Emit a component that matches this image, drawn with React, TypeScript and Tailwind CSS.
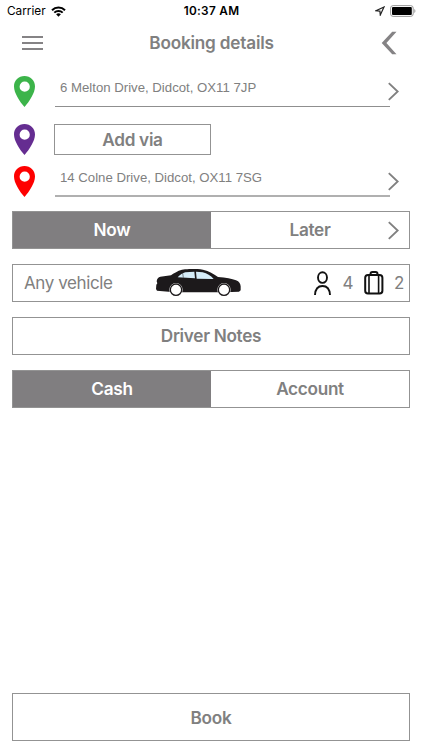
import { useState } from "react";
import clsx from "clsx";

interface AddressRowProps {
  color: string;
  address: string;
  className?: string;
  thick?: boolean;
}

function Pin({ color }: { color: string }) {
  return (
    <svg width="21" height="31" viewBox="0 0 21 31" className="shrink-0">
      <path
        fill={color}
        fillRule="evenodd"
        d="M10.5 0C4.6 0 0 4.5 0 10.4c0 6.4 5.6 15 10.5 20.6C15.4 25.4 21 16.8 21 10.4 21 4.5 16.4 0 10.5 0zm.2 5.6a5.1 5.1 0 1 1 0 10.2 5.1 5.1 0 0 1 0-10.2z"
      />
    </svg>
  );
}

function Chevron() {
  return (
    <svg width="11" height="19" viewBox="0 0 11 19" fill="none" stroke="#808080" strokeWidth="1.9" className="shrink-0">
      <path d="M.8 1.1 9.7 9.5.8 17.9" />
    </svg>
  );
}

function AddressRow({ color, address, className, thick }: AddressRowProps) {
  return (
    <div className={clsx("flex h-[31px] pl-[14px]", className)}>
      <Pin color={color} />
      <button
        className={clsx(
          "ml-5 flex w-[335px] items-start pl-[5px] pt-[3px] text-left font-['Liberation_Sans',sans-serif] text-[13.2px] leading-[17px] text-[#808080]",
          thick ? "border-b-2 border-[#b0b0b0]" : "border-b border-[#8f8f8f]"
        )}
      >
        {address}
      </button>
      <span className="-ml-[2px] pt-[6px]">
        <Chevron />
      </span>
    </div>
  );
}

function Segmented({ options, arrow }: { options: string[]; arrow?: boolean }) {
  const [selected, setSelected] = useState(options[0]);

  return (
    <div className="mx-3 mb-[15px] flex h-[38px] border border-[#939393]">
      {options.map((o, i) => (
        <button
          key={o}
          onClick={() => setSelected(o)}
          className={clsx(
            "relative flex-1 text-[17.2px] font-semibold tracking-[-0.3px]",
            selected === o ? "bg-[#807e80] text-white" : "text-[#808080]"
          )}
        >
          {o}
          {arrow && i === options.length - 1 && (
            <span className="absolute right-[10px] top-[9px]">
              <Chevron />
            </span>
          )}
        </button>
      ))}
    </div>
  );
}

function Car() {
  return (
    <svg width="86" height="28" viewBox="20 26 258 84">
      <path
        fill="#1c191b"
        d="M23 91l-3-5 1-13 3-4-2-6c1-9 5-12 11-14l32-4c18-12 30-17 42-18 20-2 38-2 54 1 19 4 31 12 45 22 24 2 42 5 54 10 10 4 13 10 14 18v12l-5 4-45 2H98l-40-2z"
      />
      <path fill="#d5ecf8" d="M85 51c7-8 15-13 23-15l27-2 2 20zM140 34l20 2c13 3 24 10 33 20l-51-1z" />
      <path stroke="#1c191b" strokeWidth="1.5" d="M100 38l2 14" />
      {[80, 224].map((x) => (
        <g key={x}>
          <circle cx={x} cy="88" r="20" fill="#fff" />
          <circle cx={x} cy="88" r="17" fill="#fff" stroke="#1c191b" strokeWidth="4" />
        </g>
      ))}
    </svg>
  );
}

function StatusBar() {
  return (
    <div className="flex h-[22px] items-center text-black">
      <div className="flex flex-1 items-center pl-[7px] text-[11.8px]">
        <span className="pt-[2px]">Carrier</span>
        <svg width="15" height="11" viewBox="0 0 15 11" className="ml-[5px]">
          <g fill="none" stroke="#000" strokeWidth="2">
            <path d="M1 4.2a9.2 9.2 0 0 1 13 0" />
            <path d="M3.3 6.6a6 6 0 0 1 8.4 0" />
          </g>
          <path d="M7.5 10.8 5.1 8.3a3.5 3.5 0 0 1 4.8 0z" />
        </svg>
      </div>
      <span className="pt-[2px] text-[11.8px] font-semibold tracking-[0.3px]">10:37 AM</span>
      <div className="flex flex-1 items-center justify-end pr-[6px]">
        <svg width="10" height="10" viewBox="0 0 10 10" fill="none" stroke="#222" strokeWidth="1.2">
          <path d="M9 1 1 4.7l3.9.4.4 3.9z" />
        </svg>
        <svg width="26" height="12" viewBox="0 0 26 12" className="ml-[5px]">
          <rect x=".6" y=".6" width="22.6" height="10.8" rx="2.5" fill="none" stroke="#999" />
          <rect x="2" y="2" width="19.8" height="8" rx="1" />
          <path d="M24.3 4v4c1.500-.6 1.500-3.400 0-4z" fill="#999" />
        </svg>
      </div>
    </div>
  );
}

export default function App() {
  return (
    <div className="flex h-[750px] w-[422px] flex-col bg-white font-[Inter,sans-serif] text-[#808080]">
      <StatusBar />

      {/* Header */}
      <header className="flex h-[42px] items-center justify-between pl-[22px] pr-[25px]">
        <button aria-label="Menu" className="flex w-[21px] flex-col gap-1">
          <span className="h-[2px] bg-[#858385]" />
          <span className="h-[2px] bg-[#858385]" />
          <span className="h-[2px] bg-[#858385]" />
        </button>
        <h1 className="mr-px text-[17.2px] font-semibold tracking-[-0.2px]">Booking details</h1>
        <button aria-label="Back">
          <svg width="16" height="24" viewBox="0 0 16 24" fill="#858385">
            <path d="M11.200.8H15.500L5.400 12l10.100 11.300h-4.300L.7 12z" />
          </svg>
        </button>
      </header>

      {/* Route */}
      <AddressRow className="mt-3" color="#3cb44a" address="6 Melton Drive, Didcot, OX11 7JP" />
      <div className="mt-[17px] flex h-[31px] pl-[14px]">
        <Pin color="#652d91" />
        <button className="ml-[19px] w-[157px] border border-[#939393] pt-px text-[17.2px] font-semibold tracking-[-0.3px]">
          Add via
        </button>
      </div>
      <AddressRow className="mt-[11px]" color="#fe0000" address="14 Colne Drive, Didcot, OX11 7SG" thick />

      <div className="h-[14px]" />
      <Segmented options={["Now", "Later"]} arrow />

      {/* Vehicle */}
      <button className="mx-3 mb-[15px] flex h-[38px] items-center border border-[#939393] pl-[11px] pr-[5px] text-[17px] tracking-[-0.4px]">
        <span className="w-[132px] pt-px text-left">Any vehicle</span>
        <Car />
        <span className="ml-auto flex items-center">
          <svg width="17" height="25" viewBox="0 0 17 25" fill="none" stroke="#111" strokeWidth="1.9">
            <ellipse cx="8.5" cy="6.6" rx="4.5" ry="5.3" />
            <path d="M1 24c.3-5.500 3-9 7.500-9s7.200 3.500 7.500 9" />
          </svg>
          <span className="ml-[11px] pt-px">4</span>
          <svg width="20" height="24" viewBox="0 0 20 24" fill="none" stroke="#111" strokeWidth="2" className="ml-[11px]">
            <rect x="1.200" y="4" width="17.200" height="18.600" rx="2.800" />
            <path d="M5 4v18.600M14.600 4v18.600" strokeWidth="1.600" />
            <path d="M6.500 4V3c0-1.200.8-2 2-2h3c1.200 0 2 .8 2 2v1" />
          </svg>
          <span className="ml-[10px] pt-px">2</span>
        </span>
      </button>

      <button className="mx-3 mb-[15px] h-[38px] border border-[#939393] text-[17.2px] font-semibold tracking-[-0.3px]">
        Driver Notes
      </button>

      <Segmented options={["Cash", "Account"]} />

      <button className="mx-3 mb-[9px] mt-auto h-[48px] border border-[#939393] pt-px text-[17.2px] font-semibold tracking-[-0.3px]">
        Book
      </button>
    </div>
  );
}
